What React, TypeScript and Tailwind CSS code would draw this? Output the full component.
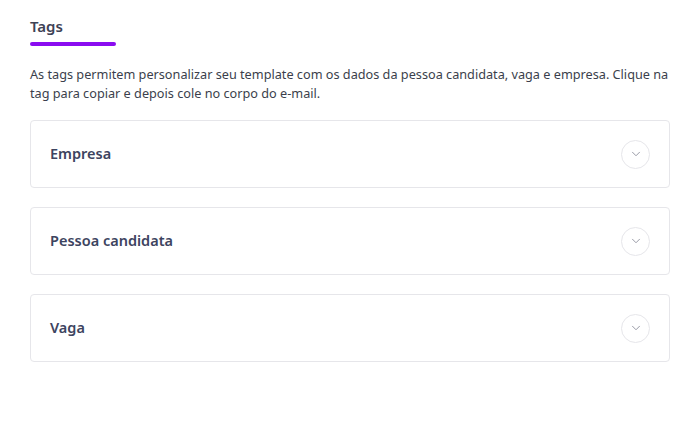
import { ChevronDown } from 'lucide-react';

const SECTIONS = ['Empresa', 'Pessoa candidata', 'Vaga'];

function TagSection({ title }: { title: string }) {
  return (
    <div className="flex h-[68px] items-center justify-between rounded border border-[#e6e6ea] bg-white pl-[19px] pr-[19px]">
      <span className="text-[14.5px] font-semibold text-[#3d4460]">{title}</span>
      <button
        type="button"
        className="flex size-[29px] items-center justify-center rounded-full border border-[#e6e6ea] text-[#8a8d99]"
        aria-label={`Expandir ${title}`}
      >
        <ChevronDown size={14} strokeWidth={1.5} />
      </button>
    </div>
  );
}

export default function App() {
  return (
    <div className="min-h-[432px] w-[688px] bg-white font-['Noto_Sans',sans-serif]">
      <div className="px-[30px] pt-[14px]">
        <div className="inline-flex flex-col">
          <span className="text-[15px] font-semibold leading-[22px] text-[#3d4255]">Tags</span>
          <div className="mt-[5px] h-[4px] w-[86px] rounded-full bg-[#8a0cf0]" />
        </div>
        <p className="mt-[19px] whitespace-nowrap text-[12.7px] leading-[19px] text-[#3b3f4c]">
          As tags permitem personalizar seu template com os dados da pessoa candidata, vaga e empresa. Clique na
          <br />
          tag para copiar e depois cole no corpo do e-mail.
        </p>
        <div className="mt-[17px] flex w-[640px] flex-col gap-[19px]">
          {SECTIONS.map(title => (
            <TagSection key={title} title={title} />
          ))}
        </div>
      </div>
    </div>
  );
}
